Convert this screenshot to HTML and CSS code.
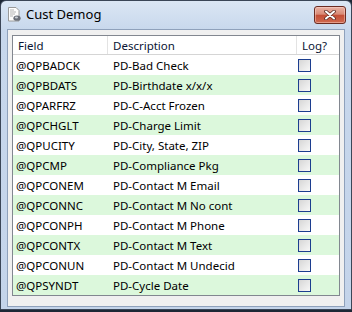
FILE: index.html
```html
<!DOCTYPE html>
<html>
<head>
<meta charset="utf-8">
<title>Cust Demog</title>
<link rel="stylesheet" href="styles.css">
</head>
<body>
<div class="window">
  <div class="titlebar">
    <svg class="appicon" width="16" height="16" viewBox="0 0 16 16">
      <path d="M2.5 1.5h7.5l3 3v10.5h-10.5z" fill="#fdfdfd" stroke="#9a9a9a"/>
      <path d="M4 4h4M4 6h6M4 8h5M4 10h3" stroke="#b5b5b5"/>
      <ellipse cx="11" cy="12.2" rx="3.6" ry="2.6" fill="#6a6f78"/>
      <ellipse cx="10.4" cy="11.6" rx="1.6" ry="1" fill="#c9ced6"/>
    </svg>
    <span class="title">Cust Demog</span>
    <div class="close">
      <svg width="12" height="10" viewBox="0 0 12 10">
        <path d="M2 1.5l8 7M10 1.5l-8 7" stroke="#5a2a22" stroke-width="3.6" stroke-linecap="round"/>
        <path d="M2 1.5l8 7M10 1.5l-8 7" stroke="#ffffff" stroke-width="2" stroke-linecap="round"/>
      </svg>
    </div>
  </div>
  <div class="client">
    <div class="grid">
      <div class="row head">
        <div class="c1">Field</div>
        <div class="c2">Description</div>
        <div class="c3">Log?</div>
      </div>
      <div class="row"><div class="c1">@QPBADCK</div><div class="c2">PD-Bad Check</div><div class="c3"><span class="cb"></span></div></div>
      <div class="row alt"><div class="c1">@QPBDATS</div><div class="c2">PD-Birthdate x/x/x</div><div class="c3"><span class="cb"></span></div></div>
      <div class="row"><div class="c1">@QPARFRZ</div><div class="c2">PD-C-Acct Frozen</div><div class="c3"><span class="cb"></span></div></div>
      <div class="row alt"><div class="c1">@QPCHGLT</div><div class="c2">PD-Charge Limit</div><div class="c3"><span class="cb"></span></div></div>
      <div class="row"><div class="c1">@QPUCITY</div><div class="c2">PD-City, State, ZIP</div><div class="c3"><span class="cb"></span></div></div>
      <div class="row alt"><div class="c1">@QPCMP</div><div class="c2">PD-Compliance Pkg</div><div class="c3"><span class="cb"></span></div></div>
      <div class="row"><div class="c1">@QPCONEM</div><div class="c2">PD-Contact M Email</div><div class="c3"><span class="cb"></span></div></div>
      <div class="row alt"><div class="c1">@QPCONNC</div><div class="c2">PD-Contact M No cont</div><div class="c3"><span class="cb"></span></div></div>
      <div class="row"><div class="c1">@QPCONPH</div><div class="c2">PD-Contact M Phone</div><div class="c3"><span class="cb"></span></div></div>
      <div class="row alt"><div class="c1">@QPCONTX</div><div class="c2">PD-Contact M Text</div><div class="c3"><span class="cb"></span></div></div>
      <div class="row"><div class="c1">@QPCONUN</div><div class="c2">PD-Contact M Undecid</div><div class="c3"><span class="cb"></span></div></div>
      <div class="row alt"><div class="c1">@QPSYNDT</div><div class="c2">PD-Cycle Date</div><div class="c3"><span class="cb"></span></div></div>
    </div>
  </div>
</div>
</body>
</html>
```
FILE: styles.css
```css
html, body {
  margin: 0;
  padding: 0;
}
body {
  width: 352px;
  height: 312px;
  overflow: hidden;
  background: #1d2735;
  font-family: "Noto Sans", "Open Sans", sans-serif;
  font-size: 11.5px;
  color: #000;
}
.window {
  box-sizing: border-box;
  width: 352px;
  height: 310px;
  border: 1px solid #3b4657;
  border-radius: 6px 6px 0 0;
  background: linear-gradient(#dbe6f4, #c7d7ec 30px, #c4d4ea);
  padding: 0 6px 2px;
  display: flex;
  flex-direction: column;
}
.titlebar {
  height: 28px;
  display: flex;
  align-items: center;
}
.appicon {
  margin-left: -1px;
  margin-right: 4px;
  margin-top: -2px;
  flex: none;
}
.title {
  font-size: 13px;
  color: #000;
  margin-top: -3px;
}
.close {
  margin-left: auto;
  margin-right: -1px;
  align-self: flex-start;
  margin-top: 5px;
  box-sizing: border-box;
  width: 32px;
  height: 18px;
  border: 1px solid #6b2c22;
  border-radius: 3px;
  background: linear-gradient(#e9b2a4, #d98a76 45%, #c44e36 52%, #cf6a50);
  box-shadow: inset 0 0 0 1px rgba(255, 220, 210, 0.45);
  display: flex;
  align-items: center;
  justify-content: center;
}
.client {
  flex: 1;
  background: #f0f0f0;
  border: 1px solid #8fa1bb;
  padding: 5px 4px;
}
.grid {
  border: 1px solid #828790;
  background: #fff;
}
.row {
  display: grid;
  grid-template-columns: 95px 189px 1fr;
  height: 20px;
  align-items: center;
}
.row.alt {
  background: #dcf8dc;
}
.row.head {
  height: 18px;
  border-bottom: 1px solid #d5d5d5;
  align-items: stretch;
}
.head > div {
  display: flex;
  align-items: center;
  color: #0a1433;
}
.head .c1, .head .c2 {
  border-right: 1px solid #e3e3e3;
}
.c1 {
  padding-left: 3px;
  white-space: nowrap;
}
.head .c1 {
  padding-left: 5px;
}
.c2 {
  padding-left: 5px;
  white-space: nowrap;
}
.c3 {
  padding-left: 1px;
  display: flex;
  align-items: center;
}
.head .c3 {
  padding-left: 5px;
}
.cb {
  box-sizing: border-box;
  width: 13px;
  height: 13px;
  border: 1px solid #1c3e8f;
  background: linear-gradient(135deg, #d6d6d6, #f7f7f7);
}
```
